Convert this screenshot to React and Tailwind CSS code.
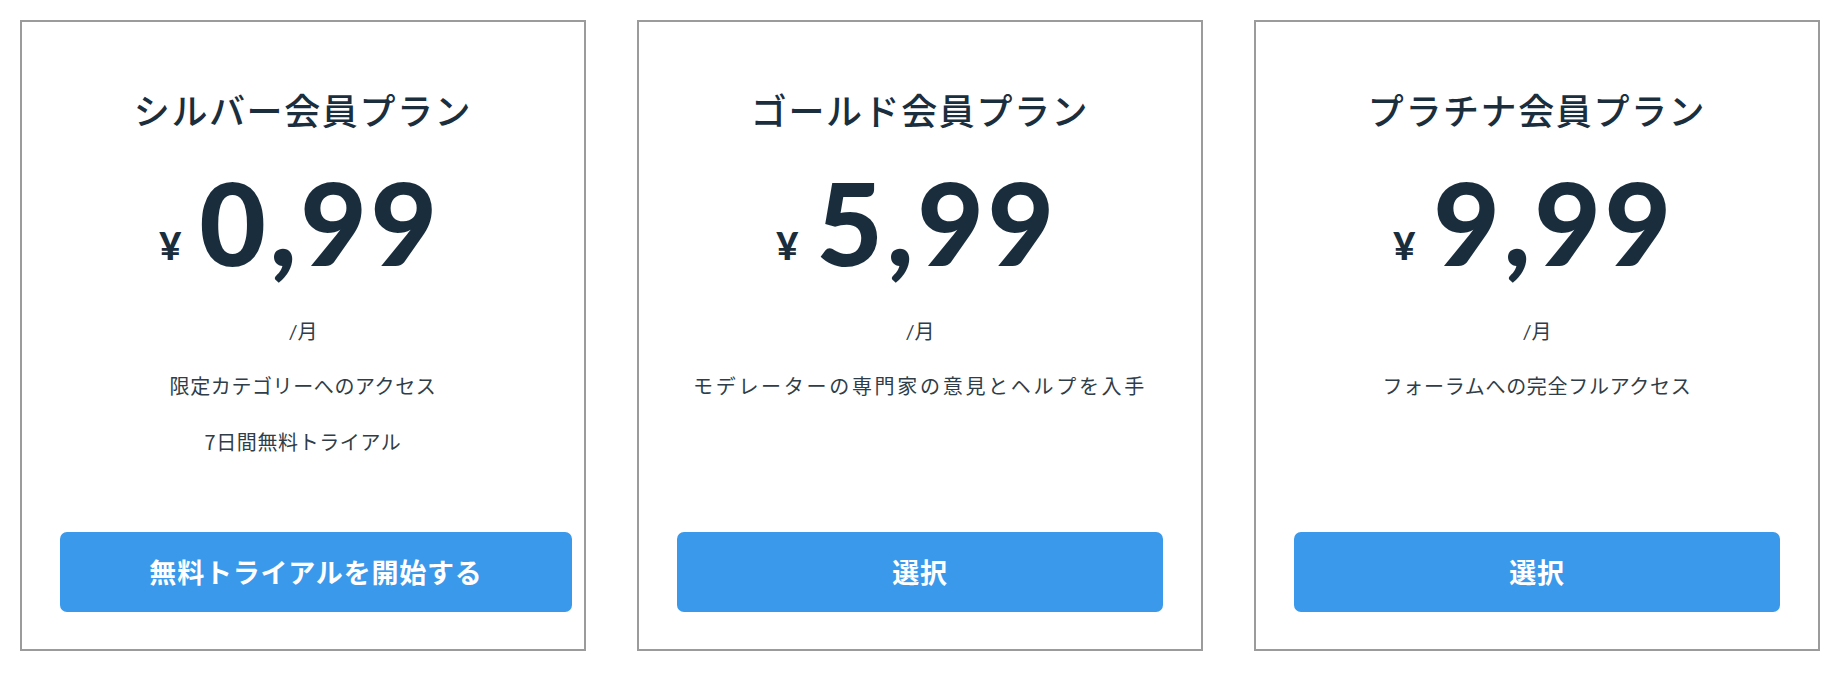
import React from "react";

const plans = [
  {
    title: "シルバー会員プラン",
    price: "0,99",
    features: ["限定カテゴリーへのアクセス", "7日間無料トライアル"],
    featureTrack: "tracking-[0.6px]",
    button: "無料トライアルを開始する",
    wide: true,
  },
  {
    title: "ゴールド会員プラン",
    price: "5,99",
    features: ["モデレーターの専門家の意見とヘルプを入手"],
    featureTrack: "tracking-[2.7px]",
    button: "選択",
    wide: false,
  },
  {
    title: "プラチナ会員プラン",
    price: "9,99",
    features: ["フォーラムへの完全フルアクセス"],
    featureTrack: "tracking-[0.7px]",
    button: "選択",
    wide: false,
  },
];

function Card({ plan }) {
  return (
    <div className="w-[566px] h-[631px] shrink-0 border-2 border-[#9b9b9b] bg-white px-[38px] pt-[65px] pb-[37px] flex flex-col items-center font-['Noto_Sans_CJK_JP','Noto_Sans',sans-serif]">
      <h2 className="text-[36px] leading-[44px] font-medium tracking-[1.6px] text-[#1b2e3e] text-center">
        {plan.title}
      </h2>
      <div className="mt-[33px] h-[115px] leading-none text-[#192d3d] whitespace-nowrap pr-[6px] font-[Lato,'Noto_Sans',sans-serif]">
        <span className="text-[38px] font-black align-[6px] mr-[18px]">¥</span>
        <span className="text-[115px] font-black tracking-[3.5px]">{plan.price}</span>
      </div>
      <div className="mt-[38px] text-[20px] leading-[28px] text-[#2f3d48]">
        <span className="font-[Lato,sans-serif]">/</span>月
      </div>
      <div className="mt-[27px] flex flex-col items-center gap-[28px]">
        {plan.features.map((f) => (
          <p
            key={f}
            className={"text-[20px] leading-[28px] text-[#2f3d48] whitespace-nowrap " + plan.featureTrack}
          >
            {f}
          </p>
        ))}
      </div>
      <button
        className={
          "mt-auto h-[80px] rounded-[7px] bg-[#3a99eb] text-white text-[27px] font-bold tracking-[0.8px] flex items-center justify-center self-start " +
          (plan.wide ? "w-[512px]" : "w-full")
        }
      >
        {plan.button}
      </button>
    </div>
  );
}

export default function App() {
  return (
    <div className="w-[1842px] h-[674px] bg-white pl-[20px] pt-[20px] flex gap-[51px]">
      {plans.map((p) => (
        <Card key={p.title} plan={p} />
      ))}
    </div>
  );
}
